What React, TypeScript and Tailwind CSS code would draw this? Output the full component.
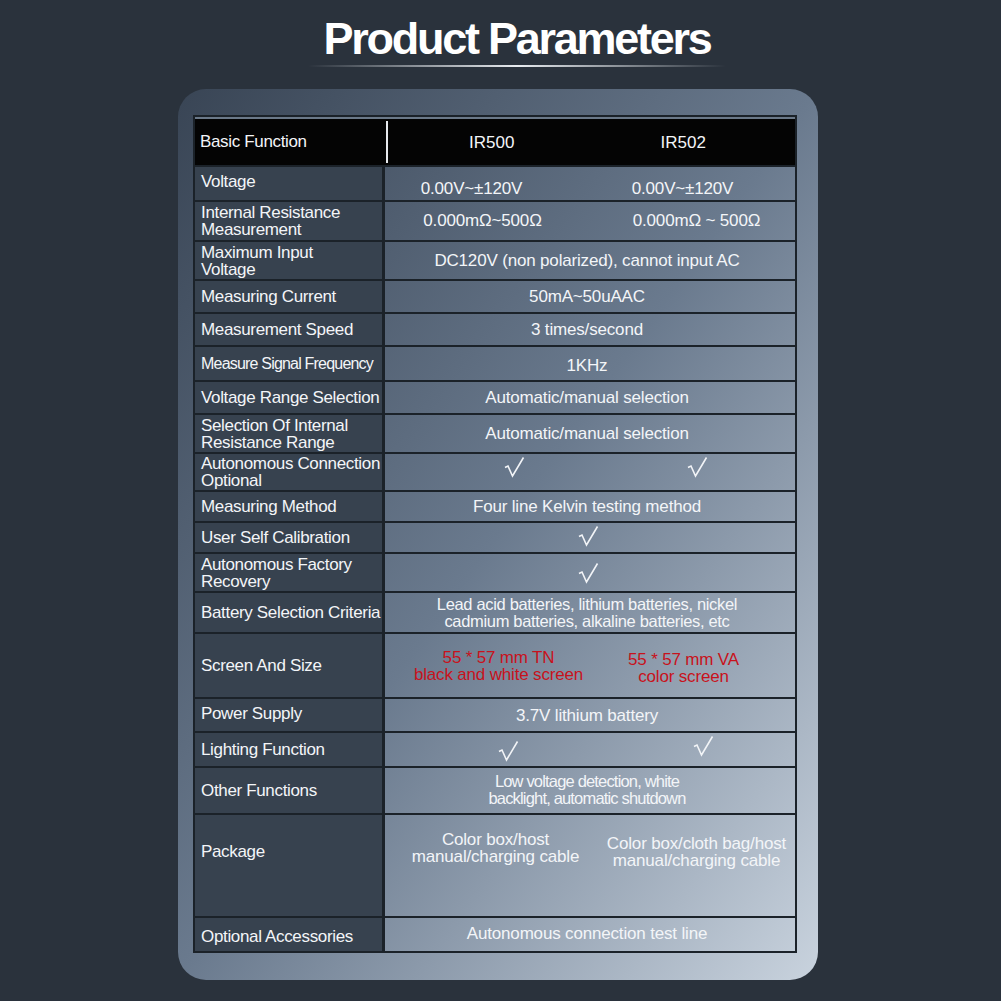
import React from "react";

type Cell = { text: React.ReactNode; cls?: string };
type Row = {
  label: React.ReactNode;
  h: string;
  labelCls?: string;
  span?: Cell;
  pair?: [Cell, Cell];
  pairCls?: string;
};

function Check() {
  return (
    <svg width="22" height="22" viewBox="0 0 22 22" fill="none" stroke="#f2f4f7" strokeWidth="1.6" strokeLinejoin="miter">
      <path d="M2 11.5 L5 10 L9.5 20 L20.5 1.5" />
    </svg>
  );
}

const rows: Row[] = [
  {
    label: "Voltage",
    h: "h-[35px]",
    labelCls: "pb-[4px]",
    pair: [
      { text: "0.00V~±120V", cls: "pr-[32px] pt-[10px]" },
      { text: "0.00V~±120V", cls: "pr-[20px] pt-[10px]" },
    ],
  },
  {
    label: (
      <>
        Internal Resistance
        <br />
        Measurement
      </>
    ),
    h: "h-[40px]",
    pair: [
      { text: "0.000mΩ~500Ω", cls: "pr-[10px]" },
      { text: "0.000mΩ ~ 500Ω", cls: "pl-[8px]" },
    ],
  },
  {
    label: (
      <>
        Maximum Input
        <br />
        Voltage
      </>
    ),
    h: "h-[39px]",
    span: { text: "DC120V (non polarized), cannot input AC" },
  },
  { label: "Measuring Current", h: "h-[33px]", span: { text: "50mA~50uAAC" } },
  { label: "Measurement Speed", h: "h-[33px]", span: { text: "3 times/second" } },
  {
    label: <span className="whitespace-nowrap text-[16px] tracking-[-0.05em]">Measure Signal Frequency</span>,
    h: "h-[35px]",
    span: { text: "1KHz", cls: "pt-[4px]" },
  },
  { label: "Voltage Range Selection", h: "h-[33px]", span: { text: "Automatic/manual selection" } },
  {
    label: (
      <>
        Selection Of Internal
        <br />
        Resistance Range
      </>
    ),
    h: "h-[39px]",
    span: { text: "Automatic/manual selection" },
  },
  {
    label: (
      <>
        Autonomous Connection
        <br />
        Optional
      </>
    ),
    h: "h-[38px]",
    pair: [
      { text: <Check />, cls: "pl-[52px] pb-[10px]" },
      { text: <Check />, cls: "pl-[8px] pb-[10px]" },
    ],
  },
  { label: "Measuring Method", h: "h-[31px]", span: { text: "Four line Kelvin testing method" } },
  { label: "User Self Calibration", h: "h-[31px]", span: { text: <Check />, cls: "pb-[4px] pl-[2px]" } },
  {
    label: (
      <>
        Autonomous Factory
        <br />
        Recovery
      </>
    ),
    h: "h-[39px]",
    span: { text: <Check />, cls: "pl-[2px]" },
  },
  {
    label: "Battery Selection Criteria",
    h: "h-[41px]",
    span: {
      text: (
        <span className="text-[16.5px] leading-[17px] tracking-[-0.02em]">
          Lead acid batteries, lithium batteries, nickel
          <br />
          cadmium batteries, alkaline batteries, etc
        </span>
      ),
    },
  },
  {
    label: "Screen And Size",
    h: "h-[65px]",
    pair: [
      {
        text: (
          <span className="text-[#c8121c] leading-[17px]">
            55 * 57 mm TN
            <br />
            black and white screen
          </span>
        ),
        cls: "pl-[22px]",
      },
      {
        text: (
          <span className="text-[#c8121c] leading-[17px]">
            55 * 57 mm VA
            <br />
            color screen
          </span>
        ),
        cls: "pr-[18px] pt-[4px]",
      },
    ],
  },
  { label: "Power Supply", h: "h-[34px]", labelCls: "pb-[4px]", span: { text: "3.7V lithium battery", cls: "pt-[2px]" } },
  {
    label: "Lighting Function",
    h: "h-[35px]",
    pair: [
      { text: <Check />, cls: "pl-[40px] pt-[2px]" },
      { text: <Check />, cls: "pl-[20px] pb-[8px]" },
    ],
  },
  {
    label: "Other Functions",
    h: "h-[47px]",
    span: {
      text: (
        <span className="text-[16.5px] leading-[17px] tracking-[-0.05em]">
          Low voltage detection, white
          <br />
          backlight, automatic shutdown
        </span>
      ),
      cls: "pb-[2px]",
    },
  },
  {
    label: "Package",
    h: "h-[103px]",
    labelCls: "items-start pt-[28px]",
    pairCls: "items-start",
    pair: [
      {
        text: (
          <span className="leading-[17px]">
            Color box/host
            <br />
            manual/charging cable
          </span>
        ),
        cls: "pl-[16px] pt-[16px]",
      },
      {
        text: (
          <span className="leading-[17px]">
            Color box/cloth bag/host
            <br />
            manual/charging cable
          </span>
        ),
        cls: "pl-[8px] pt-[20px]",
      },
    ],
  },
  {
    label: "Optional Accessories",
    h: "h-[35px]",
    labelCls: "pt-[4px]",
    span: { text: "Autonomous connection test line", cls: "pb-[2px]" },
  },
];

export default function App() {
  return (
    <div className="w-[1001px] h-[1001px] bg-[#2a323c] font-['Liberation_Sans',Arial,sans-serif] text-[#f3f5f8] overflow-hidden">
      <div className="pl-[33px] pt-[13px] flex flex-col items-center">
        <h1 className="text-[45px] leading-[52px] font-bold tracking-[-0.05em] text-white">Product Parameters</h1>
        <div className="w-[418px] h-[2px] bg-gradient-to-r from-transparent via-[#e8ecf0] to-transparent" />
      </div>

      <div className="ml-[178px] mt-[22px] w-[640px] rounded-[28px] bg-gradient-to-br from-[#394555] via-[#6a7a8e] to-[#c9d3de] pt-[26px] pb-[27px] pl-[15px]">
        <div className="w-[604px] border-x-2 border-t-2 border-[#1b2229]">
          <div className="h-[48px] flex bg-[#040404] border-t-[2px] border-[#6b7989]">
            <div className="w-[191px] shrink-0 flex items-center pl-[5px] text-[17px] tracking-[-0.02em]">
              Basic Function
            </div>
            <div className="w-[2px] bg-[#e6e9ed] my-[2px]" />
            <div className="flex-1 flex items-center text-[17px] pt-[2px]">
              <div className="w-1/2 flex justify-center pl-[4px]">IR500</div>
              <div className="w-1/2 flex justify-center pr-[20px]">IR502</div>
            </div>
          </div>
          {rows.map((r, i) => (
            <div key={i} className={`flex border-t-2 border-[#1b2229] ${r.h}`}>
              <div
                className={`w-[190px] shrink-0 bg-[#37424f] border-r-[3px] border-[#1b2229] flex pl-[6px] text-[17px] leading-[17px] tracking-[-0.02em] ${
                  r.labelCls && r.labelCls.includes("items-start") ? "" : "items-center"
                } ${r.labelCls ?? ""}`}
              >
                <div>{r.label}</div>
              </div>
              {r.span ? (
                <div className={`flex-1 flex items-center justify-center text-center text-[17px] tracking-[-0.01em] pr-[6px] ${r.span.cls ?? ""}`}>
                  {r.span.text}
                </div>
              ) : (
                <div className={`flex-1 flex text-center text-[17px] tracking-[-0.01em] ${r.pairCls ?? "items-center"}`}>
                  {r.pair!.map((c, j) => (
                    <div key={j} className={`w-1/2 flex justify-center ${c.cls ?? ""}`}>
                      {c.text}
                    </div>
                  ))}
                </div>
              )}
            </div>
          ))}
          <div className="h-[2px] bg-[#1b2229] -mx-[2px]" />
        </div>
      </div>
    </div>
  );
}
